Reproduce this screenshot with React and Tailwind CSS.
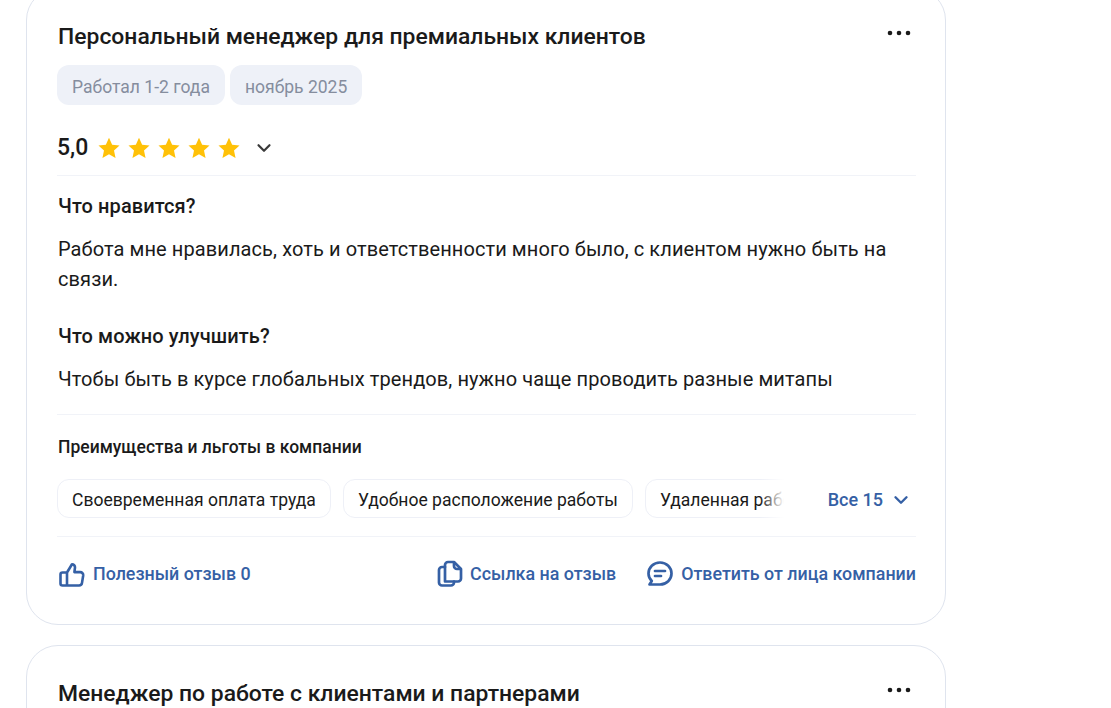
import React from 'react';
import { ChevronDown } from 'lucide-react';

const Dots = () => (
  <svg width="24" height="6" viewBox="0 0 24 6" className="shrink-0">
    <circle cx="3" cy="3" r="2.3" fill="#1a1a1a" />
    <circle cx="12" cy="3" r="2.3" fill="#1a1a1a" />
    <circle cx="21" cy="3" r="2.3" fill="#1a1a1a" />
  </svg>
);

const StarIcon = () => (
  <svg width="22" height="22" viewBox="0 0 22 22" className="shrink-0">
    <path d="M11 .8l3.150 6.900 7.350.800-5.500 5 1.550 7.400L11 17.200l-6.550 3.700L6 13.500l-5.500-5 7.350-.800z" fill="#ffc107" />
  </svg>
);

const ThumbIcon = () => (
  <svg width="28" height="28" viewBox="0 0 28 28" fill="none" stroke="#3560a5" strokeWidth="2.6" strokeLinejoin="round" strokeLinecap="round">
    <path d="M9 12.500H4.500a2 2 0 0 0-2 2v9a2 2 0 0 0 2 2h16.500a3 3 0 0 0 3-2.600l1.200-7.400a3 3 0 0 0-3-3.400h-5.800l.6-4.600a3 3 0 0 0-3-3.200L9 12.500v13" />
  </svg>
);

const CopyIcon = () => (
  <svg width="26" height="28" viewBox="0 0 26 28" fill="none" stroke="#3560a5" strokeWidth="2.700" strokeLinejoin="round" strokeLinecap="round">
    <path d="M8 21.500V5a3 3 0 0 1 3-3h6l7 7v9.500a3 3 0 0 1-3 3z" />
    <path d="M17 2.500V6a3 3 0 0 0 3 3h3.500" />
    <path d="M8 7H5a3 3 0 0 0-3 3v12.500a3 3 0 0 0 3 3h9a3 3 0 0 0 3-3v-1" />
  </svg>
);

const ChatIcon = () => (
  <svg width="28" height="28" viewBox="0 0 28 28" fill="none" stroke="#3560a5" strokeWidth="2.700" strokeLinecap="round" strokeLinejoin="round">
    <path d="M14 2.500c6.600 0 11.500 5 11.500 11s-4.900 11-11.500 11H3.500l2.300-3.500C3.500 18.800 2.500 16.400 2.500 13.500c0-6 4.900-11 11.500-11z" />
    <path d="M9 11h10M9 16h6" />
  </svg>
);

const Tag = ({ children }) => (
  <span className="h-10 px-[15px] pt-[5px] flex items-center rounded-xl bg-[#eef1f8] text-[17.55px] text-[#858d9e]">{children}</span>
);

const Perk = ({ children }) => (
  <span className="h-[39px] px-[14px] pt-[3px] flex items-center shrink-0 rounded-xl border border-[#eef0f7] text-[17.55px] text-[#1a1a1a]">{children}</span>
);

const Action = ({ icon, children }) => (
  <a className="flex items-center gap-[7px] text-[17.85px] font-medium text-[#3560a5]">
    {icon}
    <span>{children}</span>
  </a>
);

const App = () => {
  return (
    <div className="h-[708px] overflow-hidden bg-white font-['Roboto',sans-serif] text-[#1a1a1a]">
      <div className="w-[920px] ml-[26px] -mt-3 flex flex-col gap-5">
        <article className="h-[637px] rounded-[32px] border border-[#dfe4ee] pl-[30px] pr-[29px] pt-[31px]">
          <div className="flex justify-between items-start">
            <h2 className="text-[22.9px] leading-[33px] font-medium pl-px">Персональный менеджер для премиальных клиентов</h2>
            <span className="mt-[10px] mr-[5px]"><Dots /></span>
          </div>
          <div className="flex gap-[5px] mt-[12px]">
            <Tag>Работал 1-2 года</Tag>
            <Tag>ноябрь 2025</Tag>
          </div>
          <div className="flex items-center mt-[26px] h-[34px]">
            <span className="text-[23px] font-medium mr-[10px]">5,0</span>
            <div className="flex gap-2">
              {[0, 1, 2, 3, 4].map((i) => (
                <StarIcon key={i} />
              ))}
            </div>
            <ChevronDown size={22} strokeWidth={2.4} className="ml-[13px] text-[#3a3a3a]" />
          </div>
          <div className="mt-[10px] border-t border-[#f1f3f8]" />

          <h3 className="mt-[16px] text-[20px] tracking-[0.09px] leading-7 font-medium pl-px">Что нравится?</h3>
          <p className="mt-[14px] text-[20px] tracking-[0.09px] leading-[30px] w-[850px] pl-px">
            Работа мне нравилась, хоть и ответственности много было, с клиентом нужно быть на связи.
          </p>
          <h3 className="mt-[28px] text-[20px] tracking-[0.09px] leading-7 font-medium pl-px">Что можно улучшить?</h3>
          <p className="mt-[14px] text-[20px] tracking-[0.09px] leading-[30px] pl-px">
            Чтобы быть в курсе глобальных трендов, нужно чаще проводить разные митапы
          </p>
          <div className="mt-[20px] border-t border-[#f1f3f8]" />

          <h4 className="mt-[20px] text-[17.5px] leading-6 font-medium pl-px">Преимущества и льготы в компании</h4>
          <div className="flex items-center mt-[20px] h-[39px]">
            <div className="relative w-[727px] flex gap-3 overflow-hidden">
              <Perk>Своевременная оплата труда</Perk>
              <Perk>Удобное расположение работы</Perk>
              <Perk>Удаленная работа</Perk>
              <div className="absolute right-0 top-0 bottom-0 w-[24px] bg-gradient-to-r from-transparent to-white" />
            </div>
            <div className="ml-auto flex items-center gap-[7px] pt-[2px] text-[18px] font-medium text-[#3560a5] pr-[4px]">
              Все 15
              <ChevronDown size={22} strokeWidth={2.6} />
            </div>
          </div>
          <div className="mt-[18px] border-t border-[#f1f3f8]" />

          <div className="flex items-center justify-between mt-[23px] pl-px">
            <Action icon={<ThumbIcon />}>Полезный отзыв 0</Action>
            <div className="flex items-center gap-[30px]">
              <Action icon={<CopyIcon />}>Ссылка на отзыв</Action>
              <Action icon={<ChatIcon />}>Ответить от лица компании</Action>
            </div>
          </div>
        </article>

        <article className="h-[300px] rounded-[32px] border border-[#dfe4ee] pl-[30px] pr-[29px] pt-[31px]">
          <div className="flex justify-between items-start">
            <h2 className="text-[22.9px] leading-[33px] font-medium pl-px">Менеджер по работе с клиентами и партнерами</h2>
            <span className="mt-[10px] mr-[5px]"><Dots /></span>
          </div>
        </article>
      </div>
    </div>
  );
};

export default App;
